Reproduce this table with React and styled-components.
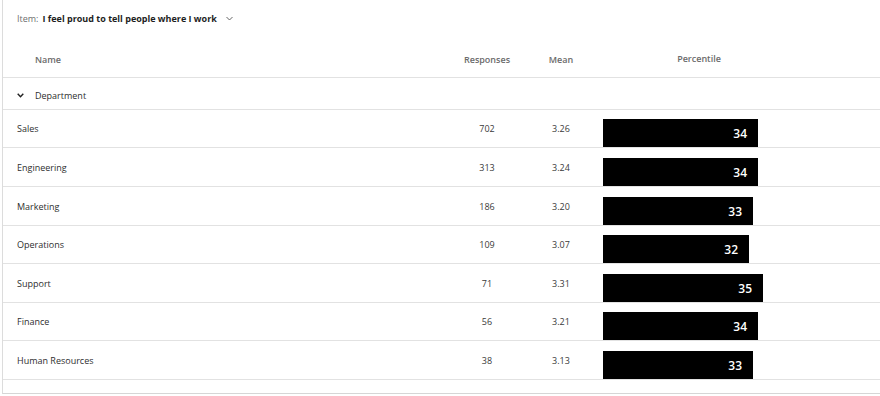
import React from 'react';
import styled, { createGlobalStyle } from 'styled-components';

const GlobalStyle = createGlobalStyle`
  html, body {
    margin: 0;
    padding: 0;
    background: #ffffff;
  }
  body {
    font-family: "Open Sans", "Liberation Sans", Arial, sans-serif;
    color: #2b2b2b;
  }
`;

const Panel = styled.div`
  box-sizing: border-box;
  margin-left: 2px;
  width: 878px;
  height: 394px;
  border-left: 1px solid #dcdcdc;
  border-bottom: 1px solid #d6d6d6;
  display: flex;
  flex-direction: column;
`;

const Toolbar = styled.div`
  height: 37px;
  display: flex;
  align-items: center;
  padding-left: 14px;
  font-size: 9px;
`;

const ItemLabel = styled.span`
  color: #6e6e6e;
  margin-right: 4px;
`;

const ItemValue = styled.span`
  color: #1e1e1e;
  font-weight: 700;
`;

const Caret = styled.svg`
  margin-left: 9px;
  width: 7px;
  height: 5px;
`;

const Row = styled.div`
  display: grid;
  grid-template-columns: 1fr 74px 74px 197px 85px;
  align-items: center;
  box-sizing: border-box;
  height: ${(p) => p.$h}px;
  padding-top: ${(p) => p.$pt || 0}px;
  border-bottom: 1px solid #e2e2e2;
  font-size: 9px;
`;

const HeadCell = styled.div`
  color: #6b6b6b;
  font-weight: 600;
  font-size: 9px;
  text-align: ${(p) => p.$align || 'center'};
  padding-left: ${(p) => p.$pl || 0}px;
  margin-top: ${(p) => p.$mt || 0}px;
`;

const NameCell = styled.div`
  padding-left: ${(p) => p.$pl || 14}px;
  color: #2e2e2e;
  display: flex;
  align-items: center;
`;

const NumCell = styled.div`
  text-align: center;
  color: #3a3a3a;
`;

const BarCell = styled.div`
  align-self: end;
  padding-left: 5px;
`;

const Bar = styled.div`
  box-sizing: border-box;
  height: 28px;
  background: #000000;
  color: #ffffff;
  font-weight: 600;
  font-size: 12px;
  display: flex;
  align-items: center;
  justify-content: flex-end;
  padding-right: 11px;
`;

const Chevron = styled.svg`
  width: 7px;
  height: 5px;
  margin-right: 11px;
`;

const rows = [
  { name: 'Sales', n: 702, mean: '3.26', pct: 34 },
  { name: 'Engineering', n: 313, mean: '3.24', pct: 34 },
  { name: 'Marketing', n: 186, mean: '3.20', pct: 33 },
  { name: 'Operations', n: 109, mean: '3.07', pct: 32 },
  { name: 'Support', n: 71, mean: '3.31', pct: 35 },
  { name: 'Finance', n: 56, mean: '3.21', pct: 34 },
  { name: 'Human Resources', n: 38, mean: '3.13', pct: 33 },
];

const heights = [38, 39, 39, 38, 39, 38, 39];

export default function App() {
  return (
    <>
      <GlobalStyle />
      <Panel>
        <Toolbar>
          <ItemLabel>Item:</ItemLabel>
          <ItemValue>I feel proud to tell people where I work</ItemValue>
          <Caret viewBox="0 0 7 5">
            <path d="M0.5 1 L3.5 4 L6.5 1" fill="none" stroke="#555" strokeWidth="0.9" />
          </Caret>
        </Toolbar>
        <Row $h={41} $pt={4}>
          <HeadCell $align="left" $pl={32} $mt={1}>Name</HeadCell>
          <HeadCell $mt={1}>Responses</HeadCell>
          <HeadCell $mt={1}>Mean</HeadCell>
          <HeadCell $pl={5} $mt={-2}>Percentile</HeadCell>
          <div />
        </Row>
        <Row $h={32} $pt={3}>
          <NameCell>
            <Chevron viewBox="0 0 7 5">
              <path d="M0.7 0.8 L3.5 3.8 L6.3 0.8" fill="none" stroke="#222" strokeWidth="1.4" />
            </Chevron>
            Department
          </NameCell>
        </Row>
        {rows.map((r, i) => (
          <Row key={r.name} $h={heights[i]}>
            <NameCell>{r.name}</NameCell>
            <NumCell>{r.n}</NumCell>
            <NumCell>{r.mean}</NumCell>
            <BarCell>
              <Bar style={{ width: `${Math.round(r.pct * 4.56)}px` }}>{r.pct}</Bar>
            </BarCell>
            <div />
          </Row>
        ))}
      </Panel>
    </>
  );
}
